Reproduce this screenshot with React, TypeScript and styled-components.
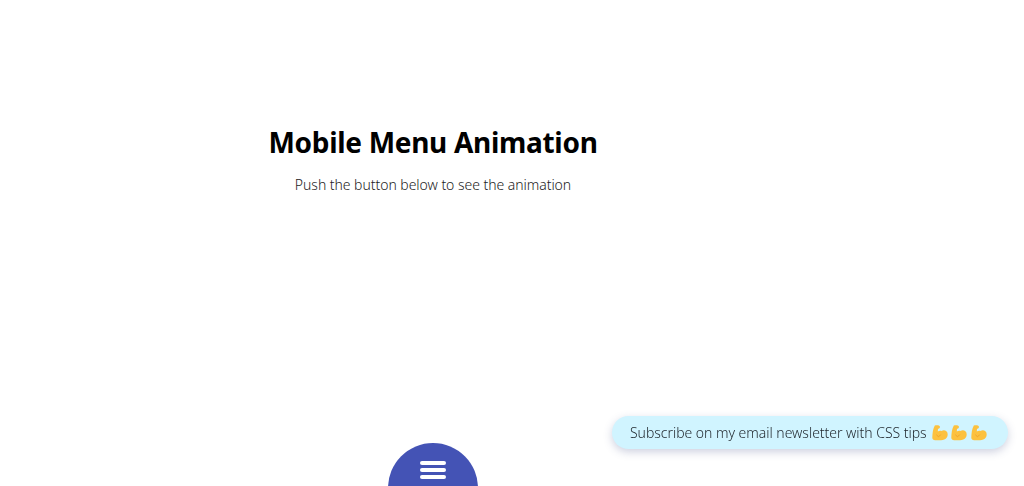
import styled, { createGlobalStyle } from "styled-components";

const GlobalStyle = createGlobalStyle`
  html, body {
    margin: 0;
    height: 100%;
    background: #fff;
    overflow: hidden;
  }
  body {
    font-family: "Noto Sans", "Open Sans", sans-serif;
  }
`;

const Page = styled.main`
  width: 866px;
  height: 486px;
  padding-top: 123px;
  box-sizing: border-box;
  text-align: center;
  position: relative;
  overflow: hidden;
`;

const Title = styled.h1`
  margin: 0;
  font-size: 28px;
  line-height: 38px;
  font-weight: 700;
  letter-spacing: -0.3px;
  color: #000;
`;

const Lead = styled.p`
  margin: 14px 0 0;
  font-size: 14px;
  line-height: 20px;
  font-weight: 300;
  letter-spacing: -0.04px;
  color: #1c1c1c;
`;

const MenuButton = styled.button`
  position: absolute;
  left: 388px;
  top: 443px;
  width: 90px;
  height: 90px;
  padding: 18px 0 0;
  border: 0;
  border-radius: 50%;
  background: #4453b5;
  display: flex;
  flex-direction: column;
  align-items: center;
  gap: 3.2px;
`;

const Bar = styled.span`
  display: block;
  width: 26px;
  height: 4px;
  border-radius: 2px;
  background: #fff;
`;

const Subscribe = styled.a`
  position: fixed;
  right: 16px;
  top: 416px;
  height: 33px;
  width: 396px;
  padding-left: 18px;
  box-sizing: border-box;
  display: flex;
  align-items: center;
  gap: 3.5px;
  border-radius: 17px;
  background: #d0f4ff;
  box-shadow: 0 3px 8px rgba(60, 70, 130, 0.25);
  color: #1f262c;
  font-size: 14px;
  font-weight: 300;
  letter-spacing: -0.03px;
  white-space: nowrap;
`;

const Label = styled.span`
  margin-right: 1.5px;
`;

const Flex = () => (
  <svg width="16" height="16" viewBox="0 0 16 16" aria-hidden="true">
    <path
      d="M2.8 .6 C4.6 -.2 7.4 .1 7.9 1.5 C8.2 2.7 7.2 3.7 6 3.8 L5.8 6.6 C6.9 5.8 8.3 5.6 9.6 6 C11 5 13.2 5.2 14.6 6.4 C16 7.8 16 10.8 14.8 12.6 C13.6 14.4 11.3 15.2 9 15.2 L3.2 15.2 C1.4 15.2 .2 14 .3 12.2 C.5 8.4 .9 3.8 2.8 .6 Z"
      fill="#fcc13f"
    />
    <path d="M4.4 9.8 L6.6 11.8 M8.8 9.6 L6.6 11.8" stroke="#eba12c" strokeWidth="0.9" fill="none" />
  </svg>
);

export default function App() {
  return (
    <>
      <GlobalStyle />
      <Page>
        <Title>Mobile Menu Animation</Title>
        <Lead>Push the button below to see the animation</Lead>
        <MenuButton aria-label="Open menu">
          <Bar />
          <Bar />
          <Bar />
        </MenuButton>
      </Page>
      <Subscribe>
        <Label>Subscribe on my email newsletter with CSS tips</Label>
        <Flex />
        <Flex />
        <Flex />
      </Subscribe>
    </>
  );
}
